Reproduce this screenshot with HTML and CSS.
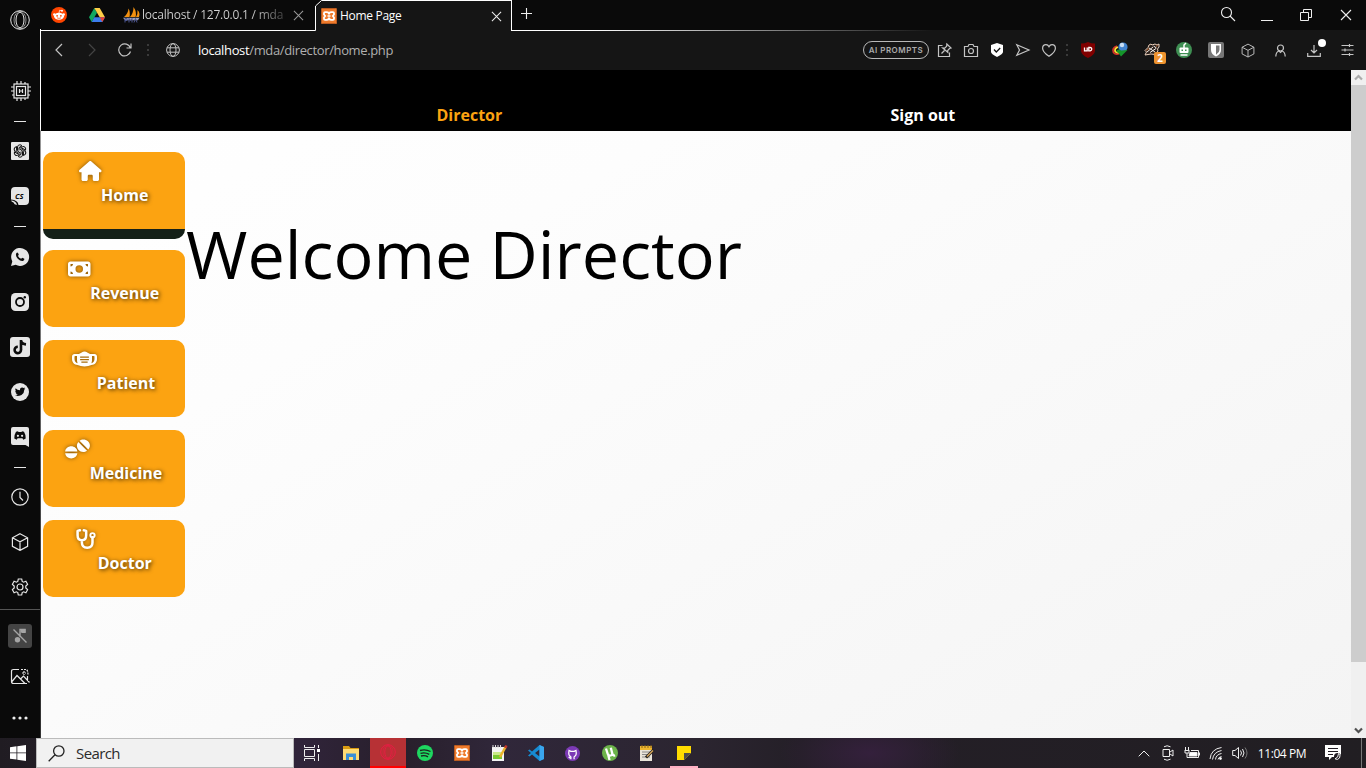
FILE: index.html
```html
<!DOCTYPE html>
<html lang="en">
<head>
<meta charset="utf-8">
<title>Home Page</title>
<link rel="stylesheet" href="styles.css">
</head>
<body>
<svg class="defs" width="0" height="0">
  <defs>
    <symbol id="close" viewBox="0 0 12 12"><path d="M1 1l10 10M11 1L1 11"/></symbol>
    <symbol id="cube" viewBox="0 0 18 18"><path d="M9 .8l7.600 4v8.600L9 17.400 1.400 13.400V4.800zM1.400 4.800L9 8.800l7.600-4M9 8.800v8.600"/></symbol>
    <symbol id="xampp" viewBox="0 0 16 16"><rect width="16" height="16" rx="1.500" fill="#ee7a2b"/><rect x=".5" y=".5" width="15" height="15" rx="1" fill="none" stroke="#b85a20"/><path d="M4 4.200h1.800q2.200 0 2.200 2.300 0-2.300 2.200-2.300H12q1 0 1 1v1.300L11.800 8 13 9.500v1.300q0 1-1 1h-1.800Q8 11.800 8 9.500q0 2.300-2.200 2.300H4q-1 0-1-1V9.500L4.200 8 3 6.500V5.200q0-1 1-1z" fill="none" stroke="#fff" stroke-width="1.800"/><path d="M6.500 8h3" stroke="#fff" stroke-width="1.600"/></symbol>
  </defs>
</svg>
<div class="browser">
  <aside class="side">
    <div class="s40"><svg class="line thin" width="20" height="20" viewBox="0 0 20 20"><circle cx="10" cy="10" r="9.300"/><ellipse cx="10" cy="10" rx="4" ry="7.800"/><ellipse cx="10" cy="10" rx="6" ry="8.800" stroke-width=".6"/></svg></div>
    <div class="s44 first"><svg class="line" width="20" height="20" viewBox="0 0 20 20"><rect x="3" y="3" width="14" height="14"/><rect x="5.500" y="5.500" width="9" height="9"/><path d="M6 0v3M10 0v3M14 1v2M6 17v3M10 17v3M14 17v2M0 6h3M0 10h3M1 14h2M17 6h3M17 10h3M17 14h2M8.500 8v4M11.500 8v4M8.500 10h3"/></svg></div>
    <div class="s14"><i class="dash"></i></div>
    <div class="s46"><svg width="18" height="18" viewBox="0 0 18 18"><rect width="18" height="18" rx="1" fill="#e6e6e6"/><g fill="none" stroke="#111" stroke-width="1"><path id="petal" d="M6.500 8V5q.2-2.200 2.400-2.200 1.300 0 2.100 1L8 5.600v2.800"/><use href="#petal" transform="rotate(60 9 9)"/><use href="#petal" transform="rotate(120 9 9)"/><use href="#petal" transform="rotate(180 9 9)"/><use href="#petal" transform="rotate(240 9 9)"/><use href="#petal" transform="rotate(300 9 9)"/></g></svg></div>
    <div class="s44"><svg width="18" height="18" viewBox="0 0 18 18"><path d="M4 0h10q4 0 4 4v10q0 4-4 4H7.500Q7 13 0 12.500V4q0-4 4-4zM0 13.500q5 0 6 4.500-3-.5-3.500-2.500Q.500 15 0 13.500z" fill="#e6e6e6"/><text x="4" y="12" class="cs">CS</text></svg></div>
    <div class="s16"><i class="dash"></i></div>
    <div class="s46"><svg width="18" height="18" viewBox="0 0 18 18"><path d="M0 18l1.300-4.600A9 9 0 1 1 4.700 16.800z" fill="#e6e6e6"/><path d="M5.300 5.200q.8-1.200 1.700-.3l.8 1.700-.8 1.300q1 2 3.100 2.900l1.200-1.100 2 1q.3 1.700-1.500 2.300-2.300.5-5-2.300-2.700-2.800-1.500-5.500z" fill="#0b0b0b"/></svg></div>
    <div class="s44"><svg width="18" height="18" viewBox="0 0 18 18"><rect width="18" height="18" rx="4.500" fill="#e6e6e6"/><circle cx="9" cy="9" r="4" fill="none" stroke="#0b0b0b" stroke-width="1.800"/><circle cx="13.800" cy="4.200" r="1.200" fill="#0b0b0b"/></svg></div>
    <div class="s46"><svg width="20" height="20" viewBox="0 0 20 20"><rect width="20" height="20" rx="3" fill="#e6e6e6"/><path d="M11 3v9.700A3.200 3.200 0 1 1 7.800 9.700M11 3.500q.8 3.500 5 3.900" fill="none" stroke="#0b0b0b" stroke-width="2.600"/></svg></div>
    <div class="s44"><svg width="18" height="18" viewBox="0 0 18 18"><circle cx="9" cy="9" r="9" fill="#e6e6e6"/><path d="M3.800 12.700q1.800.1 3-.9-1.400-.2-2-1.500h.9Q4.100 9.600 4.200 8l.8.200Q3.700 6.800 4.600 5.200q1.700 2 4.400 2.100-.3-2.800 2.200-2.900.9 0 1.500.7l1.300-.5-.8 1.200 1.100-.3-1 1.200q0 3.400-2.800 5.300-3.300 1.700-6.700.7z" fill="#0b0b0b"/></svg></div>
    <div class="s46"><svg width="18" height="20" viewBox="0 0 18 20"><path d="M2 0h14q2 0 2 2v18l-3.500-2H2q-2 0-2-2V2q0-2 2-2z" fill="#e6e6e6"/><path d="M5 4.800l2-.6.500.9h3l.5-.9 2 .6q1.800 2.800 1.700 6.700l-2.400 1.300-.9-1.500H6.600l-.9 1.500-2.400-1.300Q3.200 7.600 5 4.800z" fill="#0b0b0b"/><circle cx="6.900" cy="8.800" r="1.100" fill="#e6e6e6"/><circle cx="11.100" cy="8.800" r="1.100" fill="#e6e6e6"/></svg></div>
    <div class="s14"><i class="dash"></i></div>
    <div class="s46"><svg class="line" width="18" height="18" viewBox="0 0 18 18"><circle cx="9" cy="9" r="8.200"/><path d="M9 3.800V9.500l3 3"/></svg></div>
    <div class="s44"><svg class="line" width="18" height="18"><use href="#cube"/></svg></div>
    <div class="s45"><svg class="line" width="18" height="18" viewBox="0 0 18 18"><circle cx="9" cy="9" r="3"/><path d="M7.300 1h3.400l.5 2.400 1.400.8 2.300-.9 1.700 3-1.800 1.800v1.800l1.800 1.800-1.700 3-2.300-.9-1.400.8-.5 2.400H7.300l-.5-2.400-1.400-.8-2.300.9-1.700-3 1.800-1.800V8.100L1.400 6.300l1.700-3 2.300.9 1.400-.8z"/></svg></div>
    <div class="s52 sep"><span class="muted"><svg width="16" height="16" viewBox="0 0 16 16"><path d="M8 9V1.500h5v2.800H9.500M1.500 1.500l13 13" fill="none" stroke="#a5a5a5" stroke-width="1.400"/><path d="M8.500 1h5v3.500h-5z" fill="#a5a5a5"/><circle cx="5.500" cy="11.800" r="2.700" fill="#a5a5a5"/></svg></span></div>
    <div class="s32"><svg class="line" width="20" height="18" viewBox="0 0 20 18"><path d="M9 1.500H3.500Q1.500 1.500 1.500 3.500v10q0 2 2 2H17M17.500 8v5M2 13.500l5-6 8 8M10.500 11l3-3 6 6.500"/><path d="M11 1.500h5.500q1.500 1 1.500 6M14 3v4M12 5h4" stroke-dasharray="2 1"/></svg></div>
    <div class="s50"><svg width="16" height="4" viewBox="0 0 16 4" fill="#eee"><circle cx="2" cy="2" r="1.600"/><circle cx="8" cy="2" r="1.600"/><circle cx="14" cy="2" r="1.600"/></svg></div>
  </aside>

  <div class="main">
    <div class="tabs">
      <div class="quiet">
        <span class="pin"><svg width="16" height="16" viewBox="0 0 16 16"><circle cx="8" cy="8" r="8" fill="#ff4500"/><ellipse cx="8" cy="9.300" rx="5" ry="3.500" fill="#fff"/><circle cx="3.300" cy="7.500" r="1.200" fill="#fff"/><circle cx="12.700" cy="7.500" r="1.200" fill="#fff"/><circle cx="11" cy="3.700" r="1" fill="#fff"/><path d="M8 6l.6-2.700 2.400.5" stroke="#fff" fill="none" stroke-width=".7"/><path d="M6 10.800q2 1.200 4 0" stroke="#ff4500" fill="none" stroke-width=".7"/><circle cx="6.100" cy="8.800" r=".9" fill="#ff4500"/><circle cx="9.900" cy="8.800" r=".9" fill="#ff4500"/></svg></span>
        <span class="pin wide"><svg width="16" height="14" viewBox="0 0 16 14"><path d="M5.300 0L0 9.300 2.700 14 8 4.700z" fill="#11a861"/><path d="M5.300 0h5.400L16 9.300h-5.300z" fill="#ffcf48"/><path d="M2.700 14l2.600-4.700H16L13.300 14z" fill="#3b7ded"/><path d="M10.700 9.300H16L13.300 14z" fill="#ea4335"/></svg></span>
        <span class="tab"><svg width="17" height="16" viewBox="0 0 17 16"><path d="M1 10Q5 7 5.500 1.500 7.500 5 6.500 10zM7 10Q10.500 6 10.500 0q3.500 5 2 10zM13 10q2-3 1.500-7Q17.500 6 16 10z" fill="#f29111"/><path d="M0 10.800h16.500l-1.500 2.500H2z" fill="#9da1b8"/><path d="M2 15.500v-4h2v2H2M6 15.500v-4l1.500 2 1.500-2v4M11 15.500l1.500-4 1.500 4" stroke="#4a5490" fill="none"/></svg><span class="t1">localhost / 127.0.0.1 / mda</span><svg class="x dim" width="11" height="11"><use href="#close"/></svg></span>
      </div>
      <div class="active"><svg class="corner" width="9" height="31" viewBox="0 0 9 31"><path d="M0 0h8L1 7v24H0z" fill="#0a0a0a"/><path d="M0 30.500h.500V6L6.500 .500h3" fill="none" stroke="#fff"/></svg><svg width="16" height="16"><use href="#xampp"/></svg><span class="t2">Home Page</span><svg class="x" width="11" height="11"><use href="#close"/></svg></div>
      <div class="rest">
        <svg class="x plus" width="11" height="11" viewBox="0 0 11 11"><path d="M5.500 0v11M0 5.500h11"/></svg>
        <div class="win">
          <svg class="x" width="16" height="16" viewBox="0 0 16 16"><circle cx="6.500" cy="5.500" r="5"/><path d="M10 9l5 5"/></svg>
          <svg class="x" width="16" height="16" viewBox="0 0 16 16"><path d="M2 13.500h12" stroke-width="1"/></svg>
          <svg class="x" width="16" height="16" viewBox="0 0 16 16"><path d="M2.500 5.500h8v8h-8zM5.500 5V2.500h8v8H11" stroke-width="1"/></svg>
          <svg class="x last" width="12" height="12"><use href="#close"/></svg>
        </div>
      </div>
    </div>

    <div class="bar">
      <span class="w36"><svg class="line" width="8" height="14" viewBox="0 0 8 14"><path d="M7 1L1 7l6 6"/></svg></span>
      <span class="w30 faint"><svg class="line" width="8" height="14" viewBox="0 0 8 14"><path d="M1 1l6 6-6 6"/></svg></span>
      <span class="w36"><svg class="line" width="14" height="14" viewBox="0 0 14 14"><path d="M12.500 8.500A6 6 0 1 1 12.400 5M13 .500V5H8.500"/></svg></span>
      <span class="w10"><i class="dots"></i></span>
      <span class="w40"><svg class="line thin" width="14" height="14" viewBox="0 0 14 14"><circle cx="7" cy="7" r="6.400"/><ellipse cx="7" cy="7" rx="3" ry="6.400"/><path d="M1 4.800h12M1 9.200h12"/></svg></span>
      <span class="url"><b>localhost</b>/mda/director/home.php</span>
      <div class="tools">
        <span class="pill">AI PROMPTS</span>
        <span class="w26"><svg class="line" width="14" height="14" viewBox="0 0 14 14"><path d="M4.500 2.500h-4v11h11V9.500M3.500 10.500l3-3M8.800 1l4.200 4-1.500.5-1.800 2 .1 1.800L4.700 5l2 .1 2-1.900z"/></svg></span>
        <span class="w26"><svg class="line" width="14" height="13" viewBox="0 0 14 13"><path d="M.500 2.500H4l1-2h4l1 2h3.500v10H.500z"/><circle cx="7" cy="7" r="2.500"/></svg></span>
        <span class="w26"><svg width="12" height="14" viewBox="0 0 12 14"><path d="M6 0l6 2v7q0 2-6 5Q0 11 0 9V2z" fill="#fff"/><path d="M3 6.500L5.300 9 9.200 5" fill="none" stroke="#111" stroke-width="1.300"/></svg></span>
        <span class="w26"><svg class="line" width="14" height="12" viewBox="0 0 14 12"><path d="M.800 .800L13 6 .800 11.200 3.500 6z"/></svg></span>
        <span class="w26"><svg class="line" width="14" height="13" viewBox="0 0 14 13"><path d="M7 12.300Q.600 8 .600 4.200.700 .700 4 .700 6 .700 7 2.700 8 .700 10 .700q3.300 0 3.400 3.500Q13.400 8 7 12.300z"/></svg></span>
        <span class="w10"><i class="dots"></i></span>
        <span class="w32"><svg width="14" height="16" viewBox="0 0 14 16"><path d="M7 0q3 1.500 7 1.500V9q-.5 4-7 7-6.500-3-7-7V1.500Q4 1.500 7 0z" fill="#800000"/><path d="M3.500 5.500v3.300h2.700V5.500M7.800 5.500v3.300h1.500q1.500-.2 1.500-1.700T9.300 5.500z" fill="none" stroke="#fff" stroke-width="1.300"/></svg></span>
        <span class="w32"><svg width="16" height="16" viewBox="0 0 16 16"><path d="M5 4Q-.5 6 1.500 10.500 4 13.500 8 11" fill="none" stroke="#d63228" stroke-width="1.800"/><path d="M6 5Q2.200 6.500 3.200 9.500 5 11.500 8 9.500" fill="none" stroke="#ffe033" stroke-width="1.800"/><circle cx="11" cy="5" r="4.600" fill="#4284cf"/><circle cx="10" cy="3" r="2.200" fill="#c9def3"/><path d="M4.500 8.500q2.500-2 4.500 0l6.500-.5-3.500 3.500-3 3-2.500-3.500q-2-.5-2-2.500z" fill="#15952a"/></svg></span>
        <span class="w32 badge-host"><svg width="16" height="14" viewBox="0 0 16 14"><path d="M5 2l2-1 1 1 3-1 2 1 2-1v3l-1.500 2 .5 2-3 3.500-4-.5-6 1 1.500-3L1 7.500l3-3z" fill="#2b211c" stroke="#e8cdb9"/><path d="M3 9l6-5M6 9.500l6-4M5 5l6 4M9.500 3l3 2" fill="none" stroke="#f4ece6"/><path d="M2.500 7.500L5 5.500M12 3.500l1.500-1" stroke="#bf642c"/></svg><em>2</em></span>
        <span class="w32"><svg width="16" height="16" viewBox="0 0 16 16"><circle cx="8" cy="8" r="8" fill="#3f8f53"/><rect x="3.500" y="5.500" width="9" height="5.500" rx="1" fill="#fff"/><path d="M8 6V3l2-2M4.500 13h7" fill="none" stroke="#fff" stroke-width="1.500"/><path d="M5.500 7.500h1.500v1.500H5.500zM9 7.500h1.500v1.500H9z" fill="#3f8f53"/></svg></span>
        <span class="w32"><svg width="16" height="16" viewBox="0 0 16 16"><rect width="16" height="16" rx="2" fill="#777"/><path d="M3 2h10v6q0 4-5 6.500Q3 12 3 8z" fill="#fff"/><path d="M8 3.500h3.500V8q0 2.500-3.500 4.800z" fill="#777"/></svg></span>
        <span class="w32"><svg class="line" width="14" height="15"><use href="#cube"/></svg></span>
        <span class="w32"><svg class="line" width="12" height="13" viewBox="0 0 12 13"><circle cx="6.500" cy="4" r="3"/><path d="M1.800 12.500Q2 7.800 5 7l1.500 1.500L8 7q3 .8 3.200 5.500"/></svg></span>
        <span class="w36 dl"><svg class="line" width="14" height="13" viewBox="0 0 14 13"><path d="M7 1v7.500M4 6l3 3 3-3M.700 9v3.300h12.600V9"/></svg></span>
        <span class="w30"><svg class="line" width="13" height="12" viewBox="0 0 13 12"><path d="M.500 1.500h12M.500 6h12M.500 10.500h12M8.500 0v3M4 4.500v3M8.500 9v3"/></svg></span>
      </div>
    </div>

    <div class="view">
      <div class="page">
        <header class="top"><a class="on">Director</a><a>Sign out</a></header>
        <div class="body">
          <nav class="menu">
            <a class="btn current"><span class="in"><svg width="22.500" height="20" viewBox="0 0 576 512"><path d="M575.8 255.500c0 18-15 32.100-32 32.100h-32l.7 160.200c0 2.700-.2 5.400-.5 8.100V472c0 22.100-17.900 40-40 40H392c-22.100 0-40-17.900-40-40V384c0-17.700-14.300-32-32-32H256c-17.700 0-32 14.300-32 32v88c0 22.100-17.900 40-40 40H104c-22.100 0-40-17.900-40-40V287.600H32c-18 0-32-14-32-32.100c0-9 3-17 10-24L266.400 8c7-7 15-8 22-8s15 2 21 7L564.800 231.500c8 7 12 15 11 24z"/></svg><b>Home</b></span></a>
            <a class="btn"><span class="in"><svg width="22.500" height="20" viewBox="0 0 576 512"><path fill-rule="evenodd" d="M64 64C28.700 64 0 92.700 0 128v256c0 35.300 28.700 64 64 64h448c35.300 0 64-28.700 64-64V128c0-35.300-28.700-64-64-64H64zm64 320H64v-64c35.300 0 64 28.700 64 64zM64 192v-64h64c0 35.300-28.700 64-64 64zm384 192c0-35.300 28.700-64 64-64v64h-64zm64-192c-35.300 0-64-28.700-64-64h64v64zM288 160a96 96 0 1 1 0 192 96 96 0 1 1 0-192z"/></svg><b>Revenue</b></span></a>
            <a class="btn"><span class="in"><svg width="25" height="20" viewBox="0 0 640 512"><path fill-rule="evenodd" d="M320 64c-27 0-50 12-72 25-31 19-60 39-98 39H64c-35 0-64 29-64 64v64c0 88 59 146 144 156 48 24 104 36 176 36s128-12 176-36c85-10 144-68 144-156v-64c0-35-29-64-64-64h-86c-38 0-67-20-98-39-22-13-45-25-72-25zM128 176v112c0 27 6 52 16 74-49-10-80-46-80-106v-64c0-9 7-16 16-16zm384 0h48c9 0 16 7 16 16v64c0 60-31 96-80 106 10-22 16-47 16-74zM208 192h224v32H208zm0 64h224v32H208zm32 64h160v32H240z"/></svg><b>Patient</b></span></a>
            <a class="btn"><span class="in"><svg width="25" height="20" viewBox="0 0 640 512"><path d="M4 322h312C308 243 240 188 160 188S12 243 4 322zm0 44h312c-8 75-76 130-156 130S12 441 4 366zM372 44l224 224c60-60 54-158-8-213s-156-60-216-11zM342 76l222 222c-68 52-162 44-216-16s-58-146-6-206z"/></svg><b>Medicine</b></span></a>
            <a class="btn"><span class="in"><svg width="22.500" height="20" viewBox="0 0 576 512"><path d="M126 34L66 48v112q0 128 110 128t110-128V48l-60-14M176 288v60q0 132 136 132t136-132V210" fill="none" stroke="#fff" stroke-width="64" stroke-linecap="round" stroke-linejoin="round"/><path fill-rule="evenodd" d="M448 80a80 80 0 1 1 0 160 80 80 0 1 1 0-160zm0 50a30 30 0 1 0 0 60 30 30 0 1 0 0-60z"/></svg><b>Doctor</b></span></a>
          </nav>
          <h1>Welcome Director</h1>
        </div>
      </div>
      <div class="scroll">
        <svg width="15" height="15" viewBox="0 0 15 15"><path d="M4 9.500L7.500 6 11 9.500" fill="none" stroke="#aaa" stroke-width="2.200"/></svg>
        <i class="thumb"></i>
        <svg width="15" height="15" viewBox="0 0 15 15"><path d="M4 5.500L7.500 9 11 5.500" fill="none" stroke="#505050" stroke-width="2.200"/></svg>
      </div>
    </div>
  </div>
</div>

<footer class="taskbar">
  <span class="start"><svg width="16" height="16" viewBox="0 0 16 16" fill="#fff"><path d="M0 2.200l6.500-.9v6.200H0zM7.300 1.200L16 0v7.500H7.300zM0 8.300h6.500v6.300L0 13.700zM7.300 8.300H16V16l-8.700-1.200z"/></svg></span>
  <div class="search"><svg width="17" height="17" viewBox="0 0 17 17" fill="none" stroke="#222" stroke-width="1.300"><circle cx="10.800" cy="6" r="5.200"/><path d="M7 9.800L.700 16.300"/></svg><span>Search</span></div>
  <div class="apps">
  <span class="app"><svg width="17" height="16" viewBox="0 0 17 16" fill="none" stroke="#eee"><path d="M.500 0v2.500h10V0M.500 16v-2.500h10V16M.500 4.500h10v7H.500zM14.500 0v3M14.500 9v7"/><path d="M13 4h3v3h-3z" fill="#fff" stroke="none"/></svg></span>
  <span class="app"><svg width="16" height="14" viewBox="0 0 16 14"><path d="M0 0h6l1.500 2H16v12H0z" fill="#d99b12"/><path d="M0 3h16v11H0z" fill="#ffdb73"/><path d="M3 14V7.500h10V14h-3v-3H6v3z" fill="#3b8fd6"/></svg></span>
  <span class="app red"><svg width="16" height="16" viewBox="0 0 16 16" fill="none" stroke="#e81c43" stroke-width="1"><circle cx="8" cy="8" r="7.300"/><ellipse cx="8" cy="8" rx="3.200" ry="6.200"/><ellipse cx="8" cy="8" rx="5" ry="7" stroke-width=".6"/></svg></span>
  <span class="app"><svg width="16" height="16" viewBox="0 0 16 16"><circle cx="8" cy="8" r="8" fill="#1ed760"/><path d="M3 5.500q5.500-1.700 10.500 1M3.500 8.300q4.700-1.300 8.800 1M4 11q4-1 7 .8" fill="none" stroke="#1b2420" stroke-width="1.400"/></svg></span>
  <span class="app"><svg width="16" height="16"><use href="#xampp"/></svg></span>
  <span class="app"><svg width="16" height="16" viewBox="0 0 16 16"><path d="M1 2h12v14H1z" fill="#f4f4f4"/><path d="M2 7h9v7H2z" fill="#79c832"/><path d="M2 7h9v3H2z" fill="#c8e986"/><path d="M2 0v3M4.500 0v3M7 0v3M9.500 0v3" stroke="#ddd"/><path d="M14.500 2L9 12" stroke="#eab32c" stroke-width="2.500"/><path d="M15.500 .500l-1.300 2.300" stroke="#c2352b" stroke-width="2.500"/></svg></span>
  <span class="app"><svg width="16" height="16" viewBox="0 0 16 16"><path d="M11.500 0L16 2v12l-4.500 2L4 9.500 1.500 11.500 0 10.500 3 8 0 5.500 1.500 4.500 4 6.500zM11.500 4.500L7 8l4.500 3.500z" fill="#168bd2" fill-rule="evenodd"/><path d="M11.500 0L16 2v12l-4.500 2z" fill="#3aa6ee"/></svg></span>
  <span class="app"><svg width="15" height="15" viewBox="0 0 16 16"><circle cx="8" cy="8" r="8" fill="#7b39b5"/><path d="M6.300 14v-2.700M9.700 14v-2.700M6.300 11.500Q3.800 10.500 4 7.300l.3-2.500 1.900.9h3.600l1.900-.9.300 2.500q.2 3.200-2.300 4.200M6.300 12.800Q4.500 13 4 11.500" fill="none" stroke="#fff" stroke-width="1.300"/></svg></span>
  <span class="app"><svg width="16" height="16" viewBox="0 0 16 16"><circle cx="8" cy="8" r="8" fill="#6cb44a"/><path d="M4 3.500l1.700 5.300Q6.500 11 8.700 10.500T10 7.500L8.800 2.700M10 8q1 3 3.200 2.500M6 9l1.500 6" fill="none" stroke="#fff" stroke-width="2.300"/></svg></span>
  <span class="app"><svg width="16" height="16" viewBox="0 0 16 16"><path d="M1 2h12v14H1z" fill="#e9e5da"/><path d="M1 1h12v4H1z" fill="#eeb62f"/><path d="M3 0v3M6 0v3M9 0v3M12 0v3" stroke="#8a6418"/><path d="M3 7h8M3 9.500h8M3 12h8" stroke="#888"/><path d="M14.500 5L7 12.500" stroke="#26221e" stroke-width="3"/><path d="M14 5.500L8 11.500" stroke="#d5a65d" stroke-width="1.500"/></svg></span>
  <span class="app open"><svg width="14" height="14" viewBox="0 0 14 14"><path d="M0 0h14v7l-7 7H0z" fill="#ffdc00"/><path d="M7 14V7h7z" fill="#4c4c4c"/></svg></span>
  </div>
  <div class="tray">
    <span class="w24"><svg width="12" height="7" viewBox="0 0 12 7"><path d="M.700 6.300L6 1l5.300 5.300"/></svg></span>
    <span class="w24"><svg width="12" height="16" viewBox="0 0 12 16"><path d="M1 4.500h6.500v7H1zM8 7l3-2v6L8 9M2 1.800Q5 -.300 8.500 1.800M2 14.200q3 2.100 6.500 0"/></svg></span>
    <span class="w24"><svg width="16" height="12" viewBox="0 0 16 12"><path d="M1.500 0v3M4.500 0v3M.500 3.500h5M1 4v2h4V4M3 6v4.500h11.500v-7H7M15.500 5.500v3"/><path d="M6 5.500h7v3.500H5z" fill="#fff"/></svg></span>
    <span class="w24"><svg width="14" height="14" viewBox="0 0 14 14"><path d="M1 13Q2 3 12.500 1.500M3.500 13.500Q4.500 6 12.500 4.500M6.500 13.500q.5-5 6-6M9 13.500q.5-2.500 3.500-3"/><circle cx="11.500" cy="12.500" r="1" fill="#fff"/></svg></span>
    <span class="w24"><svg width="16" height="14" viewBox="0 0 16 14"><path d="M.700 4.500H3L6.500 1.500v11L3 9.500H.700zM8.500 4.500q2 2.500 0 5M10.500 3q3 4 0 8"/><path d="M13 1.500q4 5.500 0 11" stroke="#777"/></svg></span>
    <span class="time">11:04 PM</span>
    <span class="note"><svg width="17" height="16" viewBox="0 0 17 16"><path d="M0 0h16v12H7l-3 3v-3H0z" fill="#fff" stroke="none"/><path d="M3 3.500h10M3 6.500h10M3 9.500h5" stroke="#211c23"/><circle cx="12.500" cy="11.500" r="3.500" fill="#211c23" stroke="none"/><path d="M13.500 8.500q2.500 2 1 4.500-2 2.500-4.500.8 3.500-.8 3.500-5.300z"/></svg></span>
    <i class="edge"></i>
  </div>
</footer>
</body>
</html>
```
FILE: styles.css
```css
* { box-sizing: border-box; }
html, body { margin: 0; height: 768px; overflow: hidden; }
body { width: 1366px; display: flex; flex-direction: column; background: #0a0a0a; font-family: "Open Sans", "Noto Sans", sans-serif; }
svg { display: block; flex: none; overflow: visible; }
.defs { position: absolute; }
.line { fill: none; stroke: currentColor; stroke-width: 1.2; }
.thin { stroke-width: 1; }

.browser { flex: none; display: flex; height: 738px; background: #0a0a0a; }
.side { width: 41px; height: 738px; overflow: hidden; color: #e6e6e6; border-right: 1px solid; border-image: linear-gradient(#0a0a0a 30px, #fff 30px, #fff 130px, #999 132px, #777 330px, #333 600px, #333) 1; }
.side > div { display: flex; align-items: center; justify-content: center; }
.s14 { height: 14px; }
.s16 { height: 16px; }
.s32 { height: 32px; }
.s40 { height: 40px; }
.s44 { height: 44px; }
.s45 { height: 45px; }
.s46 { height: 46px; }
.s50 { height: 50px; }
.s52 { height: 52px; }
.side .first { margin-top: 29px; height: 45px; padding: 0 0 1px 1px; }
.sep { border-top: 1px solid #555; }
.dash { width: 12px; height: 1px; background: #e6e6e6; }
.cs { font: italic bold 7.5px "Open Sans", sans-serif; fill: #0b0b0b; }
.muted { width: 24px; height: 24px; border-radius: 3px; background: #444; display: flex; align-items: center; justify-content: center; }

.main { flex: 1; display: flex; flex-direction: column; }
.tabs { height: 31px; display: flex; }
.quiet { width: 274px; display: flex; align-items: center; border-bottom: 1px solid #fff; }
.pin { width: 36px; display: flex; justify-content: center; }
.wide { width: 39px; }
.tab { flex: 1; display: flex; align-items: center; padding-left: 7px; }
.t1 { width: 143px; margin-left: 2px; overflow: hidden; white-space: nowrap; font-size: 12px; letter-spacing: -.23px; color: transparent; background: linear-gradient(90deg, #d4d4d4 110px, #333 145px); background-clip: text; -webkit-background-clip: text; }
.x { fill: none; stroke: #eee; stroke-width: 1.1; }
.dim { stroke: #999; margin-left: 8px; }
.active { width: 197px; background: #151515; border-top: 1px solid #fff; border-right: 1px solid #fff; display: flex; align-items: center; }
.corner { margin: -1px -3px 0 0; }
.t2 { width: 149px; margin-left: 3px; font-size: 12px; letter-spacing: -.3px; color: #fff; }
.active .t2, .t1 { padding-bottom: 1px; }
.active .x { margin-left: 2px; }
.rest { flex: 1; display: flex; align-items: center; justify-content: space-between; border-bottom: 1px solid; border-image: linear-gradient(90deg, #fff 0, #fff 80px, #151515 420px) 1; }
.plus { margin: 0 0 3px 9px; }
.win { display: flex; align-items: center; gap: 23px; padding-right: 14px; }
.win .last { margin-left: 3px; }

.bar { height: 39px; display: flex; align-items: center; padding-bottom: 1px; background: #151515; color: #c4c4c4; }
.bar span { display: flex; align-items: center; justify-content: center; flex: none; }
.w10 { width: 10px; }
.w24 { width: 24px; }
.w26 { width: 26px; }
.w30 { width: 30px; }
.w32 { width: 32px; }
.w36 { width: 36px; }
.w40 { width: 40px; }
.faint { color: #444; }
.dots { width: 2px; height: 12px; background: repeating-linear-gradient(#3a3a3a 0 2px, transparent 2px 5px); }
.bar .url { margin-left: 5px; font-size: 13px; letter-spacing: -.36px; color: #b0b0b0; }
.url b { font-weight: 400; color: #fff; }
.tools { flex: 1; display: flex; justify-content: flex-end; align-items: center; padding-right: 4px; }
.bar .pill { width: 66px; height: 18px; margin-right: 3px; border: 1px solid #b8b8b8; border-radius: 9px; font: 600 8px Inter, sans-serif; letter-spacing: .5px; color: #aaa; white-space: nowrap; }
.badge-host, .dl { position: relative; }
.badge-host em { position: absolute; left: 18px; top: 9px; width: 12px; height: 12px; border-radius: 2px; background: #ee932f; color: #fff; font: bold 10px/12px "Open Sans", sans-serif; text-align: center; }
.dl::after { content: ""; position: absolute; right: 6px; top: -5px; width: 8px; height: 8px; border-radius: 50%; background: #fff; }

.view { flex: 1; display: flex; min-height: 0; }
.page { flex: 1; background: linear-gradient(150deg, #fff 0%, #fdfdfd 30%, #f4f4f4 100%); }
.top { height: 61px; background: #000; color: #fff; display: flex; padding: 34px 0 0 395.5px; font-weight: 700; font-size: 16px; line-height: 22px; }
.top a { width: 454px; white-space: nowrap; }
.top .on { color: #fca311; }
.body { display: flex; }
.menu { padding: 21px 2px 0; width: 146px; display: flex; flex-direction: column; gap: 13px; }
.btn { height: 77px; border-radius: 10px; background: #fca311; display: flex; justify-content: center; padding: 9px 1px 0 0; color: #fff; fill: #fff; }
.btn.current { height: 87px; border-bottom: 10px solid #142018; margin-bottom: -2px; }
.in { display: grid; grid-template: 20px 24px / auto auto; align-content: start; }
.in svg { filter: drop-shadow(0 0 2px rgba(0,0,0,.5)); }
.in b { grid-area: 2 / 2; font-size: 16px; line-height: 28px; text-shadow: 1px 1px 4px rgba(0,0,0,.75); }
h1 { margin: 77px 0 0 -1px; font-weight: 400; font-size: 66.5px; line-height: 91px; color: #000; white-space: nowrap; }
.scroll { width: 15px; background: #f0f0f0; display: flex; flex-direction: column; }
.thumb { height: 577px; background: #cdcdcd; margin-bottom: auto; }

.taskbar { flex: none; height: 30px; display: flex; background: radial-gradient(ellipse 90px 40px at 870px 50%, #34203c, transparent), linear-gradient(90deg, #201c22 0, #30243a 300px, #281f2b 400px, #30273a 500px, #2b2530 700px, #241f27 800px, #211e22 1366px); }
.start { width: 36px; display: flex; align-items: center; justify-content: center; }
.search { width: 258px; background: #f1f1f1; border: 1px solid #bbb; display: flex; align-items: center; gap: 11px; padding-left: 11px; color: #2b2b2b; font-size: 15px; letter-spacing: -.6px; }
.apps { display: flex; }
.app { width: 37px; display: flex; align-items: center; justify-content: center; }
.app:nth-child(2) { width: 39px; }
.red { width: 36px; background: #b73135; border-bottom: 2px solid #f00; }
.open { background: linear-gradient(#ffb0c4, #ffb0c4) center bottom / 28px 2px no-repeat; }
.tray { flex: 1; display: flex; justify-content: flex-end; align-items: center; fill: none; stroke: #eee; }
.tray span { display: flex; align-items: center; justify-content: center; }
.tray .time { width: 54px; color: #fff; stroke: none; font-size: 12px; letter-spacing: -.4px; white-space: nowrap; margin-left: 3px; }
.note { width: 49px; padding-right: 1px; margin-right: 3px; }
.edge { width: 1px; height: 30px; background: #777; margin: 0 4px 0 0; }
```
